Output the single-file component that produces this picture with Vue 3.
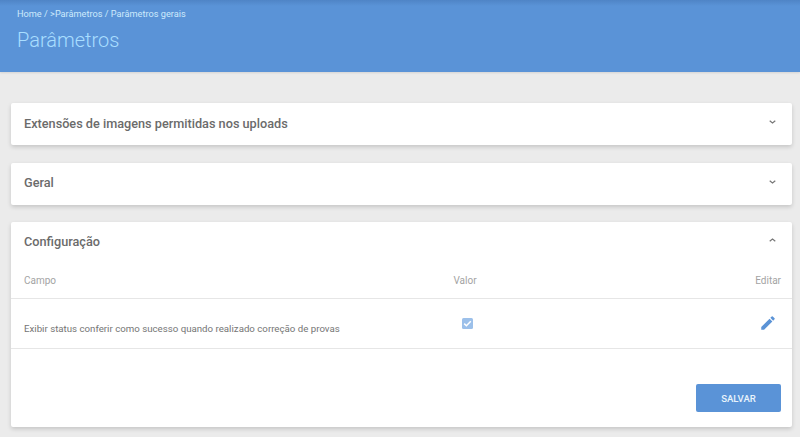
<script setup>
const closedPanels = ['Extensões de imagens permitidas nos uploads', 'Geral']
</script>

<template>
  <div class="page">
    <header class="hero">
      <div class="crumbs">Home / &gt;Parâmetros / Parâmetros gerais</div>
      <h1 class="title">Parâmetros</h1>
    </header>
    <main class="content">
      <section v-for="p in closedPanels" :key="p" class="panel closed">
        <h2 class="panel-title">{{ p }}</h2>
        <svg class="chev" width="7" height="4" viewBox="0 0 7 4"><path d="M.7.7l2.8 2.2L6.3.7" fill="none" stroke="#777" stroke-width="1.2"/></svg>
      </section>
      <section class="panel open">
        <div class="panel-head">
          <h2 class="panel-title">Configuração</h2>
          <svg class="chev" width="7" height="4" viewBox="0 0 7 4"><path d="M.7 3.3l2.8-2.2 2.8 2.2" fill="none" stroke="#777" stroke-width="1.2"/></svg>
        </div>
        <div class="row thead">
          <div class="c-field">Campo</div>
          <div class="c-val">Valor</div>
          <div class="c-edit">Editar</div>
        </div>
        <div class="row tbody">
          <div class="c-field body-text">Exibir status conferir como sucesso quando realizado correção de provas</div>
          <div class="c-val">
            <span class="check"><svg width="11" height="11" viewBox="0 0 11 11"><path d="M2.2 5.6l2.2 2.2 4.4-4.6" fill="none" stroke="#fff" stroke-width="1.5"/></svg></span>
          </div>
          <div class="c-edit">
            <svg class="pencil" width="18" height="18" viewBox="0 0 24 24"><path fill="#5b93d6" d="M3 17.25V21h3.75L17.81 9.94l-3.75-3.75L3 17.25zM20.71 7.04a1 1 0 0 0 0-1.41l-2.34-2.34a1 1 0 0 0-1.41 0l-1.83 1.83 3.75 3.75 1.83-1.83z"/></svg>
          </div>
        </div>
        <div class="actions">
          <button class="save" type="button">SALVAR</button>
        </div>
      </section>
    </main>
  </div>
</template>

<style>
html, body { margin: 0; background: #ebebeb; }
</style>

<style scoped>
.page {
  width: 800px;
  height: 437px;
  overflow: hidden;
  background: #ebebeb;
  font-family: Roboto, "Liberation Sans", sans-serif;
}
.hero {
  height: 72px;
  box-sizing: border-box;
  padding: 8px 17px 0;
  background: linear-gradient(#4f84c6 0, #5a93d7 6px);
  box-shadow: 0 1px 2px rgba(0,0,0,.1);
  color: #cdeafc;
}
.crumbs { font-size: 9.2px; line-height: 11px; }
.title {
  margin: 10px 0 0;
  font-size: 20px;
  line-height: 22px;
  font-weight: 300;
  color: #a9deff;
}
.content {
  padding: 31px 8px 0 11px;
  display: flex;
  flex-direction: column;
  gap: 17.5px;
}
.panel {
  background: #fff;
  border-radius: 2px;
  box-shadow: 0 2px 4px rgba(0,0,0,.16);
}
.closed {
  height: 42px;
  box-sizing: border-box;
  display: flex;
  align-items: center;
  justify-content: space-between;
  padding: 0 16px 2px 13px;
}
.panel-title {
  margin: 0;
  font-size: 12.7px;
  font-weight: 500;
  color: #6b6b6b;
}
.chev { display: block; margin-top: -2px; }
.open { height: 205px; display: flex; flex-direction: column; }
.panel-head {
  height: 40px;
  box-sizing: border-box;
  display: flex;
  align-items: center;
  justify-content: space-between;
  padding: 0 16px 2px 13px;
}
.row { display: flex; align-items: center; padding: 0 11px 0 13px; font-size: 10px; }
.thead { height: 36px; border-bottom: 1px solid #e6e6e6; color: #a3a3a3; }
.tbody { height: 49px; border-bottom: 1px solid #e6e6e6; color: #757575; }
.c-field { flex: 1; }
.body-text { font-size: 9.7px; padding-top: 10px; }
.c-val { width: 24px; margin-right: 274px; text-align: center; }
.c-edit { width: 30px; text-align: right; }
.check {
  display: inline-flex;
  align-items: center;
  justify-content: center;
  width: 11px;
  height: 11px;
  margin-left: 4px;
  background: #9cc0ea;
  border-radius: 1.5px;
  vertical-align: middle;
}
.pencil { display: block; margin: -2px 4px 0 auto; }
.actions { flex: 1; display: flex; justify-content: flex-end; align-items: flex-end; padding: 0 11px 15px 0; }
.save {
  width: 85px;
  height: 28px;
  border: 0;
  border-radius: 2px;
  background: #5a93d7;
  color: #e8f3fc;
  font: 500 9.6px Roboto, sans-serif;
}
</style>
